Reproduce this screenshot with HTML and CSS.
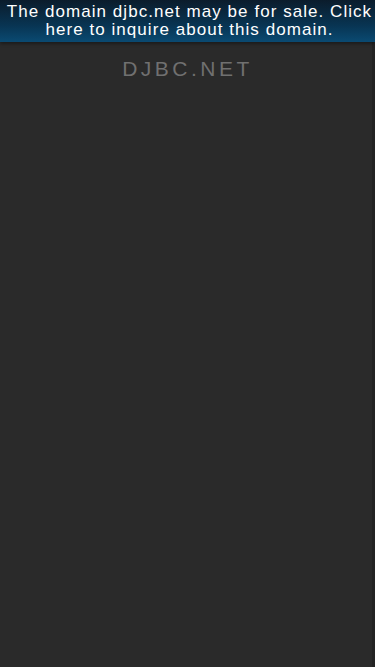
FILE: index.html
```html
<!DOCTYPE html>
<html lang="en">
<head>
    <meta charset="UTF-8">
    <meta name="viewport" content="width=device-width, initial-scale=1.0">
    <title>djbc.net</title>
    <link rel="stylesheet" href="styles.css">
</head>
<body>
    <!-- sale banner -->
    <a class="sale-banner" href="#">The domain djbc.net may be for sale. Click here to inquire about this domain.</a>

    <div class="page">
        <h1 class="domain-title">DJBC.NET</h1>
    </div>
</body>
</html>
```

FILE: styles.css
```css
* {
    margin: 0;
    padding: 0;
    box-sizing: border-box;
}

body {
    font-family: 'Liberation Sans', Arial, sans-serif;
    background: #2a2a2a;
    min-height: 100vh;
    display: flex;
    flex-direction: column;
}

/* top banner */
.sale-banner {
    display: block;
    height: 42px;
    padding: 3px 0 0 4px;
    background: linear-gradient(to bottom, #0b1c2c 0%, #083452 60%, #0a4a72 100%);
    color: #ffffff;
    font-size: 17px;
    line-height: 18px;
    letter-spacing: 1.05px;
    text-align: center;
    text-decoration: none;
    box-shadow: 0 2px 3px rgba(0, 0, 0, 0.35);
    position: relative;
    z-index: 1;
}

.page {
    flex: 1;
    padding-top: 15px;
    text-align: center;
    border-right: 3px solid #232323;
}

.domain-title {
    color: #707070;
    font-size: 21px;
    font-weight: normal;
    letter-spacing: 3.5px;
    line-height: 24px;
    padding-left: 3px;
}
```
